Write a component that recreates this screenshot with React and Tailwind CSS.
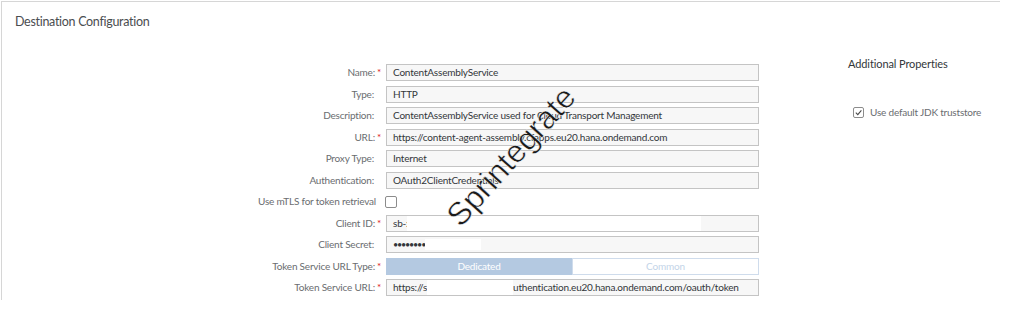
import React from "react";

const Req = () => <span className="text-[#e0191b] ml-[2px]">*</span>;

function Row({ label, req, children }) {
  return (
    <div className="flex items-center h-[21.5px]">
      <div className="w-[379px] text-right text-[10px] tracking-[-0.2px] text-[#6a6d70] whitespace-nowrap">
        {label ? <>{label}:</> : null}
        {req ? <Req /> : <span className="inline-block w-[7px]" />}
      </div>
      <div className="ml-[5px] w-[373px]">{children}</div>
    </div>
  );
}

function Input({ children }) {
  return (
    <div className="relative h-[17px] border border-[#c4c4c4] bg-[#f7f7f7] flex items-center pl-[6px] text-[10px] tracking-[-0.2px] text-[#32363a] whitespace-nowrap overflow-hidden">
      {children}
    </div>
  );
}

export default function App() {
  return (
    <div className="w-[1024px] h-[312px] bg-white relative overflow-hidden" style={{ fontFamily: 'Lato, "Liberation Sans", Arial, sans-serif' }}>
      <div className="ml-[1px] mt-[1px] w-[999px] h-[299px] border-l border-t border-[#d6d6d6] overflow-hidden">
        <div className="pl-[13px] pt-[12px] text-[12.5px] tracking-[-0.3px] text-[#4a4d50] leading-[16px]">Destination Configuration</div>
        <div className="flex mt-[32px]">
          <div className="w-[760px]">
            <Row label="Name" req><Input>ContentAssemblyService</Input></Row>
            <Row label="Type"><Input>HTTP</Input></Row>
            <Row label="Description"><Input>ContentAssemblyService used for Cloud Transport Management</Input></Row>
            <Row label="URL" req><Input>https://content-agent-assembly.cfapps.eu20.hana.ondemand.com</Input></Row>
            <Row label="Proxy Type"><Input>Internet</Input></Row>
            <Row label="Authentication"><Input>OAuth2ClientCredentials</Input></Row>
            <div className="flex items-center h-[21.5px]">
              <div className="w-[374px] text-right text-[10px] tracking-[-0.2px] text-[#6a6d70] whitespace-nowrap">Use mTLS for token retrieval</div>
              <div className="ml-[9px] w-[12px] h-[12px] border border-[#8c8c8c] rounded-[2px] bg-white" />
            </div>
            <Row label="Client ID" req>
              <Input>
                sb-:
                <span className="absolute left-[20px] top-0 w-[294px] h-[17px] bg-white" />
              </Input>
            </Row>
            <Row label="Client Secret">
              <Input>
                <span className="tracking-[-1.2px] text-[9px]">•••••••••</span>
                <span className="absolute left-[38px] top-[2px] w-[56px] h-[11px] bg-white" />
              </Input>
            </Row>
            <Row label="Token Service URL Type" req>
              <div className="flex h-[17px] text-[10px] tracking-[-0.2px]">
                <div className="w-[186px] bg-[#b4c9e1] text-white flex items-center justify-center">Dedicated</div>
                <div className="flex-1 border border-[#cfdcec] bg-white text-[#c3d4e8] flex items-center justify-center">Common</div>
              </div>
            </Row>
            <Row label="Token Service URL" req>
              <Input>
                https://s<span className="inline-block w-[86px] h-[15px] bg-white" />uthentication.eu20.hana.ondemand.com/oauth/token
              </Input>
            </Row>
            <Row label="">
              <Input>&nbsp;</Input>
            </Row>
          </div>
          <div className="pl-[86px] -mt-[5px]">
            <div className="text-[11px] tracking-[-0.1px] text-[#32363a] leading-[14px] whitespace-nowrap">Additional Properties</div>
            <div className="flex items-center mt-[34px] ml-[5px]">
              <div className="w-[11px] h-[11px] border border-[#8c8c8c] rounded-[2px] bg-white flex items-center justify-center">
                <svg width="9" height="9" viewBox="0 0 10 10"><path d="M2 5.2 L4.2 7.4 L8.2 2.6" fill="none" stroke="#4a4a4a" strokeWidth="1.2" /></svg>
              </div>
              <div className="ml-[6px] text-[10px] tracking-[-0.2px] text-[#6a6d70] whitespace-nowrap">Use default JDK truststore</div>
            </div>
          </div>
        </div>
      </div>
      <div
        className="absolute left-[511px] top-[156px] text-[32px] text-[#1a1a1a] whitespace-nowrap"
        style={{ fontFamily: '"Liberation Sans", Arial, sans-serif', transform: "translate(-50%,-50%) rotate(-48deg)", WebkitTextStroke: "0.5px white" }}
      >
        Sprintegrate
      </div>
    </div>
  );
}
